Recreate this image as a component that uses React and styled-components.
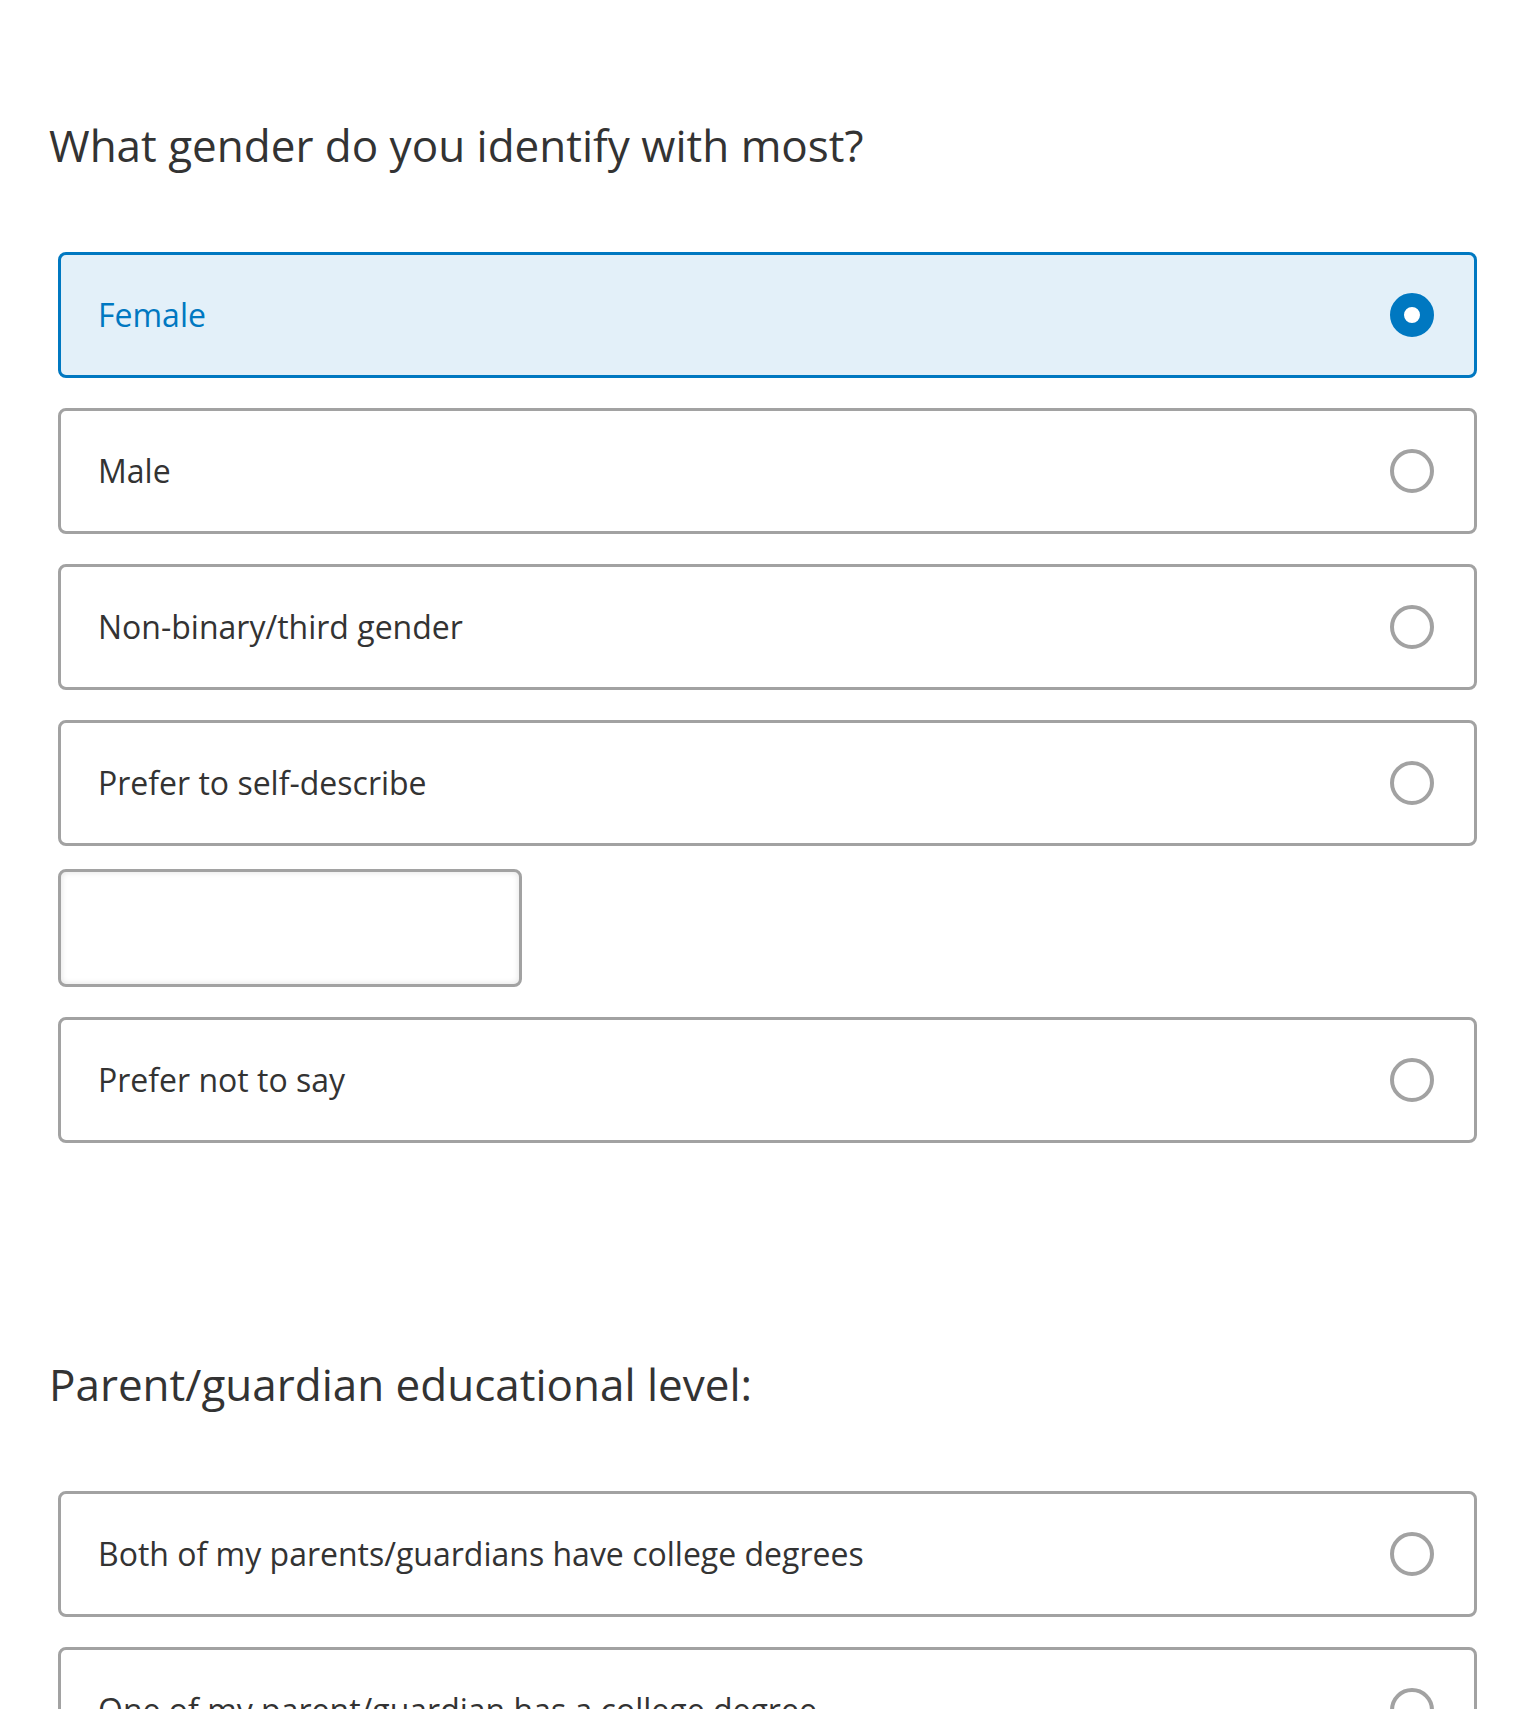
import React, { useState } from 'react';
import styled, { createGlobalStyle } from "styled-components";

const GlobalStyle = createGlobalStyle`
    body {
        margin: 0;
        background: #fff;
        font-family: "Open Sans", "Noto Sans", sans-serif;
    }
`

const Page = styled.div`
    padding: 119px 59px 80px 58px;
`
const Section = styled.section`
    margin-bottom: ${props => props.gap || 0}px;
`
const Heading = styled.h2`
    margin: 0 0 80px -9px;
    font-size: 44px;
    line-height: 1.2;
    font-weight: 400;
    color: #333;
`
const Options = styled.div`
    display: flex;
    flex-direction: column;
    gap: 30px;
`
const Option = styled.label`
    box-sizing: border-box;
    height: 126px;
    display: flex;
    align-items: center;
    justify-content: space-between;
    padding: 0 40px 0 37px;
    border: 3px solid ${props => props.selected ? '#0078c1' : '#a2a2a2'};
    border-radius: 8px;
    background: ${props => props.selected ? '#e3f0f9' : '#fff'};
    cursor: pointer;
`
const OptionText = styled.span`
    font-size: 32px;
    color: ${props => props.selected ? '#0078c1' : '#333'};
`
const Radio = styled.span`
    box-sizing: border-box;
    width: 44px;
    height: 44px;
    border-radius: 50%;
    flex-shrink: 0;
    background: #fff;
    border: ${props => props.selected ? '14px solid #0078c1' : '4px solid #a2a2a2'};
`
const Describe = styled.input`
    box-sizing: border-box;
    width: 464px;
    height: 118px;
    margin: -7px 0 0;
    border: 3px solid #a2a2a2;
    border-radius: 8px;
    box-shadow: inset 0 0 6px rgba(0, 0, 0, 0.12);
    font-family: inherit;
    font-size: 32px;
    padding: 0 20px;
    outline: none;
`

const gender = ['Female', 'Male', 'Non-binary/third gender', 'Prefer to self-describe', 'Prefer not to say']
const education = [
    'Both of my parents/guardians have college degrees',
    'One of my parent/guardian has a college degree',
    'Neither of my parents/guardians have college degrees',
    'Prefer not to say',
]

const Question = ({ title, items, value, onChange, gap }) => (
    <Section gap={gap}>
        <Heading>{title}</Heading>
        <Options>
            {items.map(item => (
                <React.Fragment key={item}>
                    <Option selected={value === item} onClick={() => onChange(item)}>
                        <OptionText selected={value === item}>{item}</OptionText>
                        <Radio selected={value === item} />
                    </Option>
                    {item === 'Prefer to self-describe' && <Describe type="text" />}
                </React.Fragment>
            ))}
        </Options>
    </Section>
)

export default () => {
    const [g, setG] = useState('Female')
    const [e, setE] = useState(null)

    return (
        <Page>
            <GlobalStyle />
            <Question title="What gender do you identify with most?" items={gender} value={g} onChange={setG} gap={215} />
            <Question title="Parent/guardian educational level:" items={education} value={e} onChange={setE} />
        </Page>
    )
}
